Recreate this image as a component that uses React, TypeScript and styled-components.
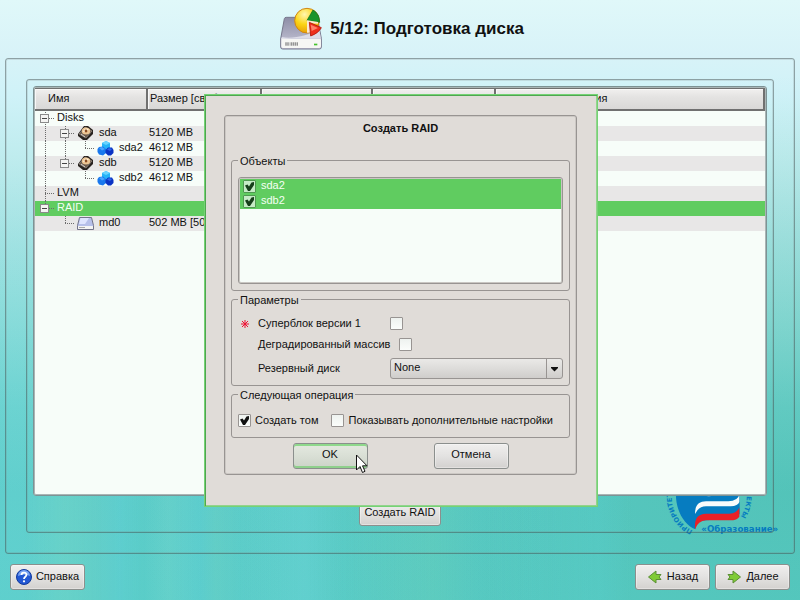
import React from "react";
import styled, { createGlobalStyle, css } from "styled-components";

const GlobalStyle = createGlobalStyle`
  *, *::before, *::after { box-sizing: border-box; }
  body {
    margin: 0;
    font: 11px/15px "Liberation Sans", Arial, sans-serif;
    color: #111;
  }
  button, input, select { font: inherit; color: inherit; }
`;

const frameBorder = css`
  border: 1px solid rgba(70, 80, 80, 0.5);
  border-radius: 3px;
  box-shadow: inset 0 0 0 1px rgba(120, 130, 130, 0.2);
`;

const Page = styled.div`
  position: relative;
  min-height: 100vh;
  display: flex;
  flex-direction: column;
  isolation: isolate;
  background:
    radial-gradient(ellipse at 0% 90%, rgba(110, 220, 230, 0.25), rgba(110, 220, 230, 0) 50%),
    radial-gradient(ellipse at 100% 80%, rgba(40, 160, 125, 0.18), rgba(40, 160, 125, 0) 60%),
    linear-gradient(180deg, #e0f8f9 0%, #d8f3f8 9%, #cff2f8 16%, #bfecee 26%, #a6e3e3 39%, #8adbd8 54%, #6bd1cd 68%, #5ccbc6 82%, #5accc6 100%);

  &::before {
    content: "";
    position: absolute;
    inset: 40% 0 0;
    z-index: -2;
    background: linear-gradient(90deg,
      transparent 3%, rgba(120, 215, 195, 0.35) 8%, rgba(110, 205, 190, 0.25) 12%, rgba(90, 205, 215, 0.2) 15%,
      rgba(80, 200, 190, 0.25) 18%, rgba(120, 215, 200, 0.25) 21%, rgba(90, 205, 220, 0.2) 25%, rgba(120, 210, 190, 0.2) 27%,
      transparent 30%, rgba(110, 215, 220, 0.35) 38%, transparent 43%, rgba(110, 210, 180, 0.25) 54%, transparent 60%,
      rgba(90, 210, 210, 0.25) 75%, transparent 79%, transparent 100%);
    mask-image: linear-gradient(180deg, transparent, #000 60%);
  }
`;

const LogoArt = styled.svg`
  position: absolute;
  z-index: -1;
  right: 18px;
  bottom: 60px;
  width: 118px;
  height: 50px;
  overflow: visible;
`;

const Header = styled.header`
  height: 58px;
  display: flex;
  align-items: center;
  justify-content: center;
  gap: 8px;
  padding-left: 4px;
`;

const Title = styled.h1`
  margin: 0;
  font-size: 17px;
  line-height: 20px;
  font-weight: bold;
`;

const OuterFrame = styled.main`
  ${frameBorder}
  flex: 1;
  display: flex;
  margin: 0 5px;
  padding: 20px;
`;

const InnerFrame = styled.section`
  ${frameBorder}
  flex: 1;
  min-width: 0;
  display: flex;
  flex-direction: column;
  align-items: center;
  gap: 4px;
  padding: 6px;
`;

const TreeFrame = styled.div`
  flex: 1;
  align-self: stretch;
  overflow: hidden;
  border: 1px solid #7d9294;
  border-radius: 3px;
  box-shadow: inset 0 0 0 1px #a9b5b5;
  padding: 1px;
  background: #f7fdf9;
`;

const Tree = styled.table`
  width: 100%;
  table-layout: fixed;
  border-collapse: separate;
  border-spacing: 0;
`;

const HeadCell = styled.th<{ $first?: boolean }>`
  height: 23px;
  padding: 0 0 2px ${(p) => (p.$first ? 13 : 2)}px;
  overflow: hidden;
  white-space: nowrap;
  text-align: left;
  font-weight: normal;
  background: linear-gradient(#f1f0ef, #e4e3e2 40%, #d9d8d7);
  border: solid #707070;
  border-width: 1px 2px 2px 0;
  box-shadow: inset 1px 1px 0 #f8f8f8;
`;

const Col = styled.col<{ $width?: number }>`
  width: ${(p) => (p.$width ? `${p.$width}px` : "auto")};
`;

const Row = styled.tr<{ $selected?: boolean }>`
  background: #f7fdf9;
  &:nth-child(even) { background: #e8e7e7; }
  ${(p) => p.$selected && css`&& { background: #60cc60; color: #f4fff4; }`}
`;

const Cell = styled.td`
  height: 15px;
  padding: 0 0 0 1px;
  line-height: 13px;
  white-space: nowrap;
  vertical-align: top;
`;

const TreeCell = styled(Cell)`
  padding: 0;
`;

const Branch = styled.div`
  display: flex;
  height: 15px;
`;

const Guide = styled.svg`
  flex: none;
  width: 20px;
  height: 15px;
`;

const ItemIcon = styled.svg`
  flex: none;
  width: 17px;
  height: 15px;
  margin: 0 3px 0 2px;
`;

const ItemName = styled.span`
  padding-left: 2px;
`;

const Button = styled.button<{ $active?: boolean }>`
  position: relative;
  display: inline-flex;
  align-items: center;
  justify-content: center;
  gap: 4px;
  min-width: 75px;
  height: 26px;
  padding: 0 4px 2px;
  white-space: nowrap;
  border: 1px solid #8b8f8d;
  border-radius: 3px;
  background: linear-gradient(#f0efee, #e3e2e1 50%, #d3d1cf);
  box-shadow: inset 0 0 0 1px rgba(255, 255, 255, 0.35);
  ${(p) => p.$active && css`
    background: linear-gradient(#e4e9e0, #d9dfd5 50%, #ccd3c8);
    box-shadow: inset 0 2px 0 #8fd98c, inset 0 -2px 0 #8fd08c;
  `}
`;

const Footer = styled.footer`
  display: flex;
  gap: 5px;
  padding: 10px;
`;

const Spacer = styled.div`
  flex: 1;
`;

const ButtonIcon = styled.svg`
  flex: none;
  width: 16px;
  height: 16px;
  margin-top: 2px;
`;

const Overlay = styled.div`
  position: absolute;
  inset: 0;
  display: flex;
  align-items: center;
  justify-content: center;
  padding-left: 2px;
`;

const Dialog = styled.div`
  width: 394px;
  max-width: 100%;
  padding: 20px 20px 31px 19px;
  background: #e0dcd8;
  border: 1px solid #74d374;
  box-shadow: inset 1px 1px 0 #4fa650, inset -1px -1px 0 #93d28d;
`;

const DialogFrame = styled.form`
  display: flex;
  flex-direction: column;
  padding: 5px 6px;
  border: 1px solid #989492;
  border-radius: 3px;
  box-shadow: inset 0 0 0 1px #ccc8c4;
`;

const DialogTitle = styled.h2`
  margin: 0 0 19px;
  font-size: 11px;
  line-height: 15px;
  text-align: center;
`;

const Group = styled.fieldset<{ $top?: number; $bottom?: number }>`
  margin: 0 0 3px;
  min-width: 0;
  padding: ${(p) => p.$top ?? 10}px 6px ${(p) => p.$bottom ?? 6}px;
  border: 1px solid #989492;
  border-radius: 3px;
`;

const Legend = styled.legend`
  padding: 0 2px;
  line-height: 12px;
`;

const ObjectList = styled.ul`
  height: 107px;
  margin: 0;
  padding: 1px;
  list-style: none;
  background: #f7fdf9;
  border: 1px solid #989492;
  border-radius: 3px;
  box-shadow: inset 0 0 0 1px #c9c6c2;
`;

const ObjectRow = styled.li`
  height: 15px;
  padding: 1px 3px;
  background: #60cc60;
  color: #f4fff4;
`;

const CheckLabel = styled.label<{ $gap?: number }>`
  display: flex;
  gap: ${(p) => p.$gap ?? 4}px;
  line-height: ${(p) => (p.$gap ? 11 : 13)}px;
`;

const CheckWrap = styled.span`
  flex: none;
  display: grid;
  width: 13px;
  height: 13px;
  & > * { grid-area: 1 / 1; }
`;

const CheckInput = styled.input<{ $tinted?: boolean }>`
  appearance: none;
  width: 13px;
  height: 13px;
  margin: 0;
  border: 1px solid ${(p) => (p.$tinted ? "#4f9a50" : "#989492")};
  border-radius: 1px;
  background: ${(p) => (p.$tinted ? "#c6ebc6" : "linear-gradient(#eef2ef, #fbfdfb)")};
  & + svg { visibility: hidden; pointer-events: none; }
  &:checked + svg { visibility: visible; }
`;

const ParamRow = styled.div<{ $height: number }>`
  display: flex;
  align-items: center;
  gap: 6px;
  height: ${(p) => p.$height}px;
  padding-left: 20px;
`;

const ParamLabel = styled.label<{ $wide?: boolean }>`
  min-width: ${(p) => (p.$wide ? 135 : 126)}px;
  white-space: nowrap;
`;

const Required = styled.svg`
  width: 8px;
  height: 8px;
  margin: 2px 3px 0 -17px;
`;

const SelectWrap = styled.div`
  flex: 1;
  display: grid;
  height: 21px;
  & > * { grid-area: 1 / 1; }
`;

const Select = styled.select`
  appearance: none;
  width: 100%;
  height: 21px;
  padding: 0 20px 2px 3px;
  border: 1px solid #989492;
  border-radius: 3px;
  background: linear-gradient(#eae9e7, #dddcda 50%, #cfcdcb);
`;

const SelectArrow = styled.svg`
  justify-self: end;
  width: 17px;
  height: 21px;
  pointer-events: none;
`;

const OptionRow = styled.div`
  display: flex;
  gap: 13px;
  padding: 3px 0 4px;
  white-space: nowrap;
`;

const DialogButtons = styled.div`
  display: flex;
  justify-content: center;
  gap: 66px;
  padding-top: 2px;
`;

const Pointer = styled.svg`
  position: absolute;
  left: 61px;
  top: 10px;
  width: 14px;
  height: 20px;
`;

type GuideKind = "box" | "boxFirst" | "boxLast" | "line" | "tee" | "corner" | "blank";

function TreeGuide({ kind }: { kind: GuideKind }) {
  const dots = { stroke: "#6b6b6b", strokeDasharray: "1 1", fill: "none" };
  const isBox = kind.startsWith("box");
  return (
    <Guide viewBox="0 0 20 15" aria-hidden="true">
      {(kind === "box" || kind === "line" || kind === "tee") && <path d="M10.5 0V15" {...dots} />}
      {kind === "boxFirst" && <path d="M10.5 1V15" {...dots} />}
      {(kind === "corner" || kind === "boxLast") && <path d="M10.5 0V7" {...dots} />}
      {kind !== "line" && kind !== "blank" && <path d="M10 7.5H20" {...dots} />}
      {isBox && (
        <>
          <rect x="5.5" y="3.5" width="8" height="8" fill="#f4f4f2" stroke="#8a8a8a" />
          <path d="M7 7.5H12" stroke="#444" />
        </>
      )}
    </Guide>
  );
}

function DiskIcon() {
  return (
    <ItemIcon viewBox="0 0 17 15">
      <path d="M1 8L7 0H11L16 4V8L10 14H6L1 10Z" fill="#28221e" />
      <path d="M2 8L8 1L15 5L9 12Z" fill="#6b5a4c" stroke="#a8a19b" strokeWidth=".6" />
      <ellipse cx="9" cy="5" rx="4.2" ry="3.6" fill="#edc592" />
      <path d="M6 6C7 2 10 2 12 3L9 6Z" fill="#fff0d6" />
      <circle cx="9" cy="5" r="1.4" fill="#8a4b22" />
      <path d="M4 8L8 11" stroke="#d8d2cc" />
    </ItemIcon>
  );
}

function CubesIcon() {
  return (
    <ItemIcon viewBox="0 0 17 15">
      <path d="M5 2L9 0L13 2V7L9 9L5 7Z" fill="#27b4f8" />
      <path d="M5 2L9 0L13 2L9 4Z" fill="#6ad4ff" />
      <path d="M.5 8L2 6L6 5.500L9 8V12L6 14.500L2 13.500L.5 11Z" fill="#1878ee" />
      <path d="M2 7L5 6L8 8L5 9.500Z" fill="#4ba6ff" />
      <path d="M8.500 9L11 6.500H15L16.500 9V12L14 14.500H11L8.500 12Z" fill="#0a34c4" />
      <path d="M10 8.500L12 7L15 8L13 10Z" fill="#2f66e8" />
    </ItemIcon>
  );
}

function DriveIcon() {
  return (
    <ItemIcon viewBox="0 0 17 15">
      <path d="M2.500 1.500H14.500L16.500 9.500V13.500H.5V9.500Z" fill="#b7c0ea" stroke="#73748a" />
      <path d="M3.500 2H12L8 8H2Z" fill="#dfe5ff" />
      <path d="M1 10H16V13H1Z" fill="#f4f4f4" />
      <path d="M2 11.500H8" stroke="#aaa" />
    </ItemIcon>
  );
}

interface TreeItem {
  guides: GuideKind[];
  icon?: () => React.ReactElement;
  name: string;
  size?: string;
  selected?: boolean;
}

const items: TreeItem[] = [
  { guides: ["boxFirst"], name: "Disks" },
  { guides: ["line", "box"], icon: DiskIcon, name: "sda", size: "5120 MB" },
  { guides: ["line", "line", "corner"], icon: CubesIcon, name: "sda2", size: "4612 MB" },
  { guides: ["line", "boxLast"], icon: DiskIcon, name: "sdb", size: "5120 MB" },
  { guides: ["line", "blank", "corner"], icon: CubesIcon, name: "sdb2", size: "4612 MB" },
  { guides: ["tee"], name: "LVM" },
  { guides: ["boxLast"], name: "RAID", selected: true },
  { guides: ["blank", "corner"], icon: DriveIcon, name: "md0", size: "502 MB [502 MB]" },
];

const columns = [
  { title: "Имя", width: 113 },
  { title: "Размер [свободно]", width: 114 },
  { title: "Файловая система", width: 111 },
  { title: "Точка монтирования", width: 123 },
  { title: "Опции монтирования" },
];

interface CheckProps extends React.InputHTMLAttributes<HTMLInputElement> {
  tinted?: boolean;
}

function CheckBox({ tinted, ...rest }: CheckProps) {
  return (
    <CheckWrap>
      <CheckInput type="checkbox" $tinted={tinted} {...rest} />
      <svg viewBox="0 0 13 13" width="13" height="13" aria-hidden="true">
        <path d="M2 5.500L4.500 4.500L6 6.500L8.500 2.500L11 2V5L7 11H5Z" fill={tinted ? "#173f1b" : "#111"} />
      </svg>
    </CheckWrap>
  );
}

function HeaderIcon() {
  return (
    <svg width="42" height="44" viewBox="0 0 126 132" aria-hidden="true">
      <defs>
        <linearGradient id="driveTop" x1="0" y1="0" x2="0" y2="1">
          <stop offset="0" stopColor="#8d8da6" />
          <stop offset="1" stopColor="#c9c9da" />
        </linearGradient>
        <radialGradient id="pieYellow" cx=".4" cy=".25" r=".9">
          <stop offset="0" stopColor="#fff7b0" />
          <stop offset=".45" stopColor="#fbd414" />
          <stop offset="1" stopColor="#e08a00" />
        </radialGradient>
      </defs>
      <path d="M13 35Q14 31 19 31H107Q112 31 113 35L124 94V120Q124 126 118 126H8Q2 126 2 120V96Z" fill="url(#driveTop)" stroke="#77778c" strokeWidth="3" />
      <path d="M5 92L36 96H122L123 98V118Q123 123 117 123H9Q4 123 4 118V96Z" fill="#f6f6f4" />
      <path d="M6 90C38 98 90 82 118 68L123 95H4Z" fill="#dcdce8" />
      <path d="M15 106H54V116H15Z" fill="#d4d4d4" />
      <path d="M18 106V116M24 106V116M34 106V116M40 106V116M46 106V116M52 106V116" stroke="#777" strokeWidth="2.500" />
      <rect x="102" y="110" width="10" height="5" fill="#44c22c" />
      <circle cx="81" cy="41" r="37" fill="url(#pieYellow)" stroke="#cf8616" strokeWidth="3" />
      <path d="M81 40L99 9Q119 20 119 46Z" fill="#19942c" stroke="#0b6b1c" strokeWidth="2" />
      <path d="M81 40V77Q89 78 97 74L90 49L114 50V45Z" fill="#fbe9d0" />
      <path d="M88 46L124 62Q116 78 92 87Z" fill="#ee2f1d" stroke="#b01408" strokeWidth="2.500" />
      <path d="M92 53L114 63L95 72Z" fill="#ff8168" />
    </svg>
  );
}

function Logo() {
  return (
    <LogoArt viewBox="192 60 354 150" aria-hidden="true">
      <defs>
        <path id="ringLeft" d="M278 182A114 114 0 0 1 330 -34" />
        <path id="ringRight" d="M330 -30A110 110 0 0 1 422 140" />
      </defs>
      <path d="M228 60C224 120 252 164 286 178C288 150 310 150 340 150H396L419 132V60Z" fill="#067cc0" />
      <path d="M308 70Q326 88 346 70Z" fill="#d7e4ea" />
      <path d="M285 132C285 104 297 95 318 94H385Q414 92 418 74V96Q414 108 392 109H318Q294 110 285 132Z" fill="#f8fbfb" />
      <path d="M285 178C283 146 292 132 318 131H388Q412 130 418 112V140Q412 151 390 151H318Q294 152 285 178Z" fill="#ea2027" />
      <g fill="#067cc0" fontFamily="DejaVu Sans, sans-serif" fontWeight="bold">
        <text fontSize="20"><textPath href="#ringLeft">ПРИОРИТЕТ</textPath></text>
        <text fontSize="20" textAnchor="end"><textPath href="#ringRight" startOffset="100%">ЕКТЫ</textPath></text>
        <text x="304" y="187" fontSize="26">«Образование»</text>
      </g>
    </LogoArt>
  );
}

function ArrowIcon({ right }: { right?: boolean }) {
  const d = right
    ? "M2 5.500H7V2L14.500 8L7 14V10.500H2L4 8Z"
    : "M14 5.500H9V2L1.500 8L9 14V10.500H14L12 8Z";
  return (
    <ButtonIcon viewBox="0 0 16 16" aria-hidden="true">
      <path d={d} fill="#7fcb35" stroke="#5b8f35" strokeLinejoin="round" />
    </ButtonIcon>
  );
}

function HelpIcon() {
  return (
    <ButtonIcon viewBox="0 0 16 16" aria-hidden="true">
      <circle cx="8" cy="8" r="7.500" fill="#2358d3" stroke="#123a9c" />
      <path d="M2 7A6 6 0 0 1 14 7Q8 4 2 7Z" fill="#7da6f4" />
      <path d="M5.500 6C5.500 2.800 10.500 2.800 10.500 5.800C10.500 7.800 8 7.600 8 10" fill="none" stroke="#fff" strokeWidth="1.800" />
      <circle cx="8" cy="12.300" r="1.100" fill="#fff" />
    </ButtonIcon>
  );
}

export default function App() {
  return (
    <>
      <GlobalStyle />
      <Page>
        <Logo />
        <Header>
          <HeaderIcon />
          <Title>5/12: Подготовка диска</Title>
        </Header>
        <OuterFrame>
          <InnerFrame>
            <TreeFrame>
              <Tree>
                <colgroup>
                  {columns.map((c) => <Col key={c.title} $width={c.width} />)}
                </colgroup>
                <thead>
                  <tr>
                    {columns.map((c, i) => <HeadCell key={c.title} $first={i === 0}>{c.title}</HeadCell>)}
                  </tr>
                </thead>
                <tbody>
                  {items.map((item) => (
                    <Row key={item.name} $selected={item.selected}>
                      <TreeCell>
                        <Branch>
                          {item.guides.map((kind, i) => <TreeGuide key={i} kind={kind} />)}
                          {item.icon && <item.icon />}
                          <ItemName>{item.name}</ItemName>
                        </Branch>
                      </TreeCell>
                      <Cell>{item.size}</Cell>
                      <Cell />
                      <Cell />
                      <Cell />
                    </Row>
                  ))}
                </tbody>
              </Tree>
            </TreeFrame>
            <Button type="button">Создать RAID</Button>
          </InnerFrame>
        </OuterFrame>
        <Footer>
          <Button type="button"><HelpIcon />Справка</Button>
          <Spacer />
          <Button type="button"><ArrowIcon />Назад</Button>
          <Button type="button"><ArrowIcon right />Далее</Button>
        </Footer>
        <Overlay>
          <Dialog role="dialog" aria-labelledby="dialog-title">
            <DialogFrame onSubmit={(e) => e.preventDefault()}>
              <DialogTitle id="dialog-title">Создать RAID</DialogTitle>
              <Group>
                <Legend>Объекты</Legend>
                <ObjectList>
                  {["sda2", "sdb2"].map((name) => (
                    <ObjectRow key={name}>
                      <CheckLabel $gap={5}><CheckBox tinted defaultChecked />{name}</CheckLabel>
                    </ObjectRow>
                  ))}
                </ObjectList>
              </Group>
              <Group $top={7} $bottom={3}>
                <Legend>Параметры</Legend>
                <ParamRow $height={21}>
                  <Required viewBox="0 0 8 8" aria-hidden="true">
                    <path d="M4 0V8M0 4H8M1 1L7 7M7 1L1 7" stroke="#ee1133" />
                  </Required>
                  <ParamLabel htmlFor="superblock">Суперблок версии 1</ParamLabel>
                  <CheckBox id="superblock" />
                </ParamRow>
                <ParamRow $height={21}>
                  <ParamLabel $wide htmlFor="degraded">Деградированный массив</ParamLabel>
                  <CheckBox id="degraded" />
                </ParamRow>
                <ParamRow $height={27}>
                  <ParamLabel htmlFor="spare">Резервный диск</ParamLabel>
                  <SelectWrap>
                    <Select id="spare"><option>None</option></Select>
                    <SelectArrow viewBox="0 0 17 21" aria-hidden="true">
                      <path d="M.5 1V20" stroke="#989492" />
                      <path d="M5 9H12V10L8.500 13.500L5 10Z" fill="#111" />
                    </SelectArrow>
                  </SelectWrap>
                </ParamRow>
              </Group>
              <Group>
                <Legend>Следующая операция</Legend>
                <OptionRow>
                  <CheckLabel><CheckBox defaultChecked />Создать том</CheckLabel>
                  <CheckLabel><CheckBox />Показывать дополнительные настройки</CheckLabel>
                </OptionRow>
              </Group>
              <DialogButtons>
                <Button type="submit" $active>
                  OK
                  <Pointer viewBox="0 0 14 20" aria-hidden="true">
                    <path d="M1.500 1V16L5 12.500L7.500 18.500L10 17.300L7.500 11.800H12Z" fill="#fff" stroke="#111" />
                  </Pointer>
                </Button>
                <Button type="button">Отмена</Button>
              </DialogButtons>
            </DialogFrame>
          </Dialog>
        </Overlay>
      </Page>
    </>
  );
}
